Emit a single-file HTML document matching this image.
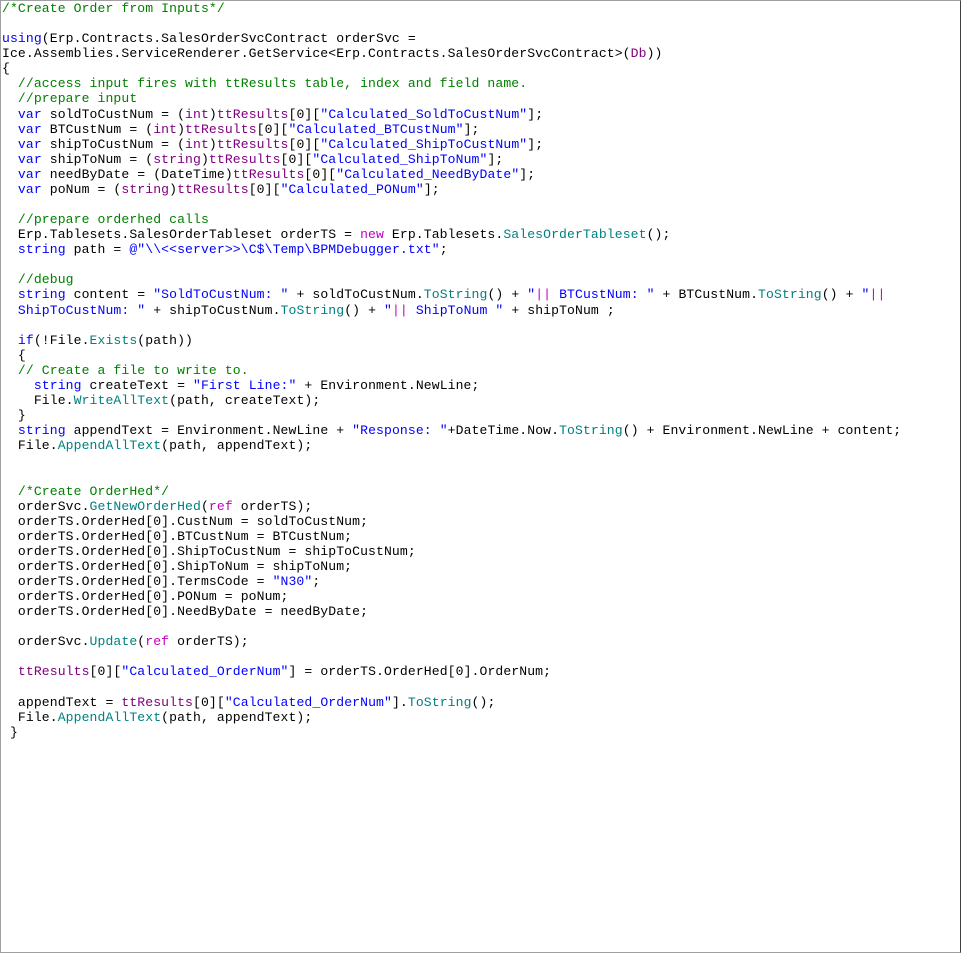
<!DOCTYPE html>
<html><head><meta charset="utf-8"><style>
html,body{margin:0;padding:0;background:#fff;}
body{width:961px;height:953px;position:relative;overflow:hidden;}
.f{position:absolute;left:0;top:0;width:959px;height:951px;border-left:1px solid #a0a0a0;border-top:1px solid #a0a0a0;border-right:1px solid #404040;border-bottom:1px solid #a0a0a0;}
pre{position:absolute;left:2px;top:1px;margin:0;font-family:"Liberation Mono",monospace;font-size:13.1px;letter-spacing:0.1px;line-height:15.08px;color:#000;}
.c{color:#008000}.k{color:#0000ff}.s{color:#0000ff}.p{color:#800080}.m{color:#008080}.r{color:#c000c0}
</style></head><body><div class="f"></div>
<pre><span class="c">/*Create Order from Inputs*/</span>

<span class="k">using</span>(Erp.Contracts.SalesOrderSvcContract orderSvc =
Ice.Assemblies.ServiceRenderer.GetService&lt;Erp.Contracts.SalesOrderSvcContract&gt;(<span class="p">Db</span>))
{
  <span class="c">//access input fires with ttResults table, index and field name.</span>
  <span class="c">//prepare input</span>
  <span class="k">var</span> soldToCustNum = (<span class="p">int</span>)<span class="p">ttResults</span>[0][<span class="s">"Calculated_SoldToCustNum"</span>];
  <span class="k">var</span> BTCustNum = (<span class="p">int</span>)<span class="p">ttResults</span>[0][<span class="s">"Calculated_BTCustNum"</span>];
  <span class="k">var</span> shipToCustNum = (<span class="p">int</span>)<span class="p">ttResults</span>[0][<span class="s">"Calculated_ShipToCustNum"</span>];
  <span class="k">var</span> shipToNum = (<span class="p">string</span>)<span class="p">ttResults</span>[0][<span class="s">"Calculated_ShipToNum"</span>];
  <span class="k">var</span> needByDate = (DateTime)<span class="p">ttResults</span>[0][<span class="s">"Calculated_NeedByDate"</span>];
  <span class="k">var</span> poNum = (<span class="p">string</span>)<span class="p">ttResults</span>[0][<span class="s">"Calculated_PONum"</span>];

  <span class="c">//prepare orderhed calls</span>
  Erp.Tablesets.SalesOrderTableset orderTS = <span class="r">new</span> Erp.Tablesets.<span class="m">SalesOrderTableset</span>();
  <span class="k">string</span> path = <span class="s">@"\\&lt;&lt;server&gt;&gt;\C$\Temp\BPMDebugger.txt"</span>;

  <span class="c">//debug</span>
  <span class="k">string</span> content = <span class="s">"SoldToCustNum: "</span> + soldToCustNum.<span class="m">ToString</span>() + <span class="s">"<span class="r">||</span> BTCustNum: "</span> + BTCustNum.<span class="m">ToString</span>() + <span class="s">"<span class="r">||</span></span>
  <span class="s">ShipToCustNum: "</span> + shipToCustNum.<span class="m">ToString</span>() + <span class="s">"<span class="r">||</span> ShipToNum "</span> + shipToNum ;

  <span class="k">if</span>(!File.<span class="m">Exists</span>(path))
  {
  <span class="c">// Create a file to write to.</span>
    <span class="k">string</span> createText = <span class="s">"First Line:"</span> + Environment.NewLine;
    File.<span class="m">WriteAllText</span>(path, createText);
  }
  <span class="k">string</span> appendText = Environment.NewLine + <span class="s">"Response: "</span>+DateTime.Now.<span class="m">ToString</span>() + Environment.NewLine + content;
  File.<span class="m">AppendAllText</span>(path, appendText);


  <span class="c">/*Create OrderHed*/</span>
  orderSvc.<span class="m">GetNewOrderHed</span>(<span class="r">ref</span> orderTS);
  orderTS.OrderHed[0].CustNum = soldToCustNum;
  orderTS.OrderHed[0].BTCustNum = BTCustNum;
  orderTS.OrderHed[0].ShipToCustNum = shipToCustNum;
  orderTS.OrderHed[0].ShipToNum = shipToNum;
  orderTS.OrderHed[0].TermsCode = <span class="s">"N30"</span>;
  orderTS.OrderHed[0].PONum = poNum;
  orderTS.OrderHed[0].NeedByDate = needByDate;

  orderSvc.<span class="m">Update</span>(<span class="r">ref</span> orderTS);

  <span class="p">ttResults</span>[0][<span class="s">"Calculated_OrderNum"</span>] = orderTS.OrderHed[0].OrderNum;

  appendText = <span class="p">ttResults</span>[0][<span class="s">"Calculated_OrderNum"</span>].<span class="m">ToString</span>();
  File.<span class="m">AppendAllText</span>(path, appendText);
 }
</pre></body></html>
